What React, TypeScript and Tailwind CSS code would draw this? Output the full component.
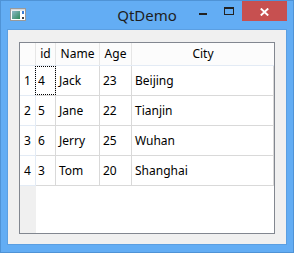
import React from "react";

const rows = [
  { n: "1", id: "4", name: "Jack", age: "23", city: "Beijing" },
  { n: "2", id: "5", name: "Jane", age: "22", city: "Tianjin" },
  { n: "3", id: "6", name: "Jerry", age: "25", city: "Wuhan" },
  { n: "4", id: "3", name: "Tom", age: "20", city: "Shanghai" },
];

function AppIcon() {
  return (
    <svg width="16" height="13" viewBox="0 0 16 13">
      <rect x="0.5" y="0.5" width="15" height="12" fill="#ffffff" stroke="#9a9a9a" />
      <rect x="1" y="1" width="14" height="1.5" fill="#d8d8d8" />
      <defs>
        <linearGradient id="g" x1="0" y1="0" x2="1" y2="1">
          <stop offset="0" stopColor="#8fb9c8" />
          <stop offset="1" stopColor="#2f8a5a" />
        </linearGradient>
      </defs>
      <rect x="2" y="3" width="8" height="8" fill="url(#g)" />
      <rect x="12" y="3" width="2" height="3" fill="#3b7fd6" />
      <rect x="12" y="9" width="2" height="2" fill="#444" />
    </svg>
  );
}

export default function App() {
  const font = { fontFamily: '"Noto Sans", "Open Sans", sans-serif' };
  return (
    <div
      className="w-[294px] h-[253px] bg-[#63adf4] border border-[#4f93d6] flex flex-col"
      style={font}
    >
      {/* title bar */}
      <div className="h-[28px] grid grid-cols-[1fr_auto_1fr]">
        <div className="pl-[9px] pt-[7px]">
          <AppIcon />
        </div>
        <div className="text-[15px] leading-none text-[#1e1e1e] pt-[7px]">QtDemo</div>
        <div className="flex justify-end pr-[6px]">
          <div className="w-[26px] h-[20px] flex justify-center pt-[12px]">
            <div className="w-[8px] h-[2px] bg-[#222]" />
          </div>
          <div className="w-[26px] h-[20px] flex justify-center pt-[6px]">
            <div className="w-[10px] h-[8px] border border-t-2 border-[#222]" />
          </div>
          <div className="w-[45px] h-[20px] bg-[#c75050] flex items-start justify-center pt-[7px]">
            <svg width="9" height="8" viewBox="0 0 9 8">
              <path d="M0.8 0.5 L8.2 7.5 M8.2 0.5 L0.8 7.5" stroke="#ffffff" strokeWidth="1.9" />
            </svg>
          </div>
        </div>
      </div>

      {/* client */}
      <div className="mx-[6px] h-[216px] border border-[#5b9fe2]">
        <div className="w-full h-full bg-[#f0f0f0] pl-[11px] pt-[12px]">
          <div className="w-[256px] h-[192px] border border-[#828790] bg-white flex flex-col text-[12px] leading-none text-black">
            {/* header */}
            <div className="flex h-[23px] border-b border-[#e3ebf5] bg-[#fcfcfc]">
              <div className="w-[16px] border-r border-[#e6e6e6]" />
              <div className="w-[20px] border-r border-[#e6e6e6] flex items-center justify-center">id</div>
              <div className="w-[44px] border-r border-[#e6e6e6] flex items-center justify-center">Name</div>
              <div className="w-[32px] border-r border-[#e6e6e6] flex items-center justify-center">Age</div>
              <div className="w-[142px] flex items-center justify-center">City</div>
            </div>
            {rows.map((r, i) => (
              <div key={r.n} className="flex h-[30px]">
                <div className="w-[16px] bg-white border-r border-b border-[#e3ebf5] flex items-center justify-center">
                  {r.n}
                </div>
                <div className="relative w-[20px] border-r border-b border-[#d9d9d9] flex items-center pl-[2px]">
                  {r.id}
                  {i === 0 && (
                    <span className="absolute -left-px -right-px top-0 bottom-0 border border-dotted border-black" />
                  )}
                </div>
                <div className="w-[44px] border-r border-b border-[#d9d9d9] flex items-center pl-[3px]">
                  {r.name}
                </div>
                <div className="w-[32px] border-r border-b border-[#d9d9d9] flex items-center pl-[3px]">
                  {r.age}
                </div>
                <div className="w-[142px] border-r border-b border-[#d9d9d9] flex items-center pl-[3px]">
                  {r.city}
                </div>
              </div>
            ))}
            <div className="flex flex-1">
              <div className="w-[16px] bg-[#f0f0f0]" />
              <div className="flex-1 bg-white" />
            </div>
          </div>
        </div>
      </div>
    </div>
  );
}
